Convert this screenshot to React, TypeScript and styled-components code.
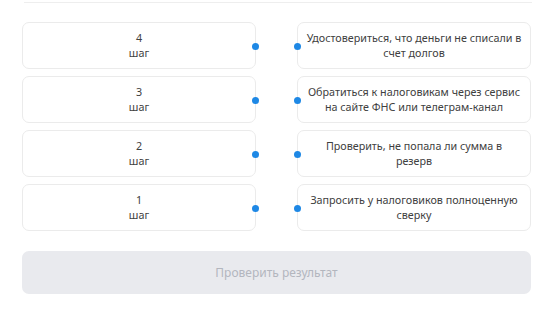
import React from "react";
import styled, { createGlobalStyle } from "styled-components";

const steps = [
  { num: 4, text: "Удостовериться, что деньги не списали в\nсчет долгов" },
  { num: 3, text: "Обратиться к налоговикам через сервис\nна сайте ФНС или телеграм-канал" },
  { num: 2, text: "Проверить, не попала ли сумма в\nрезерв" },
  { num: 1, text: "Запросить у налоговиков полноценную\nсверку" },
];

const App = () => {
  return (
    <>
      <GlobalStyle />
      <Page>
        <PrevEdge />
        <Steps>
          {steps.map((s) => (
            <Row key={s.num}>
              <StepCard>
                <span>{s.num}</span>
                <span>шаг</span>
                <Dot side="right" />
              </StepCard>
              <AnswerCard>
                <Dot side="left" />
                {s.text}
              </AnswerCard>
            </Row>
          ))}
        </Steps>
        <CheckButton disabled>Проверить результат</CheckButton>
      </Page>
    </>
  );
};

const GlobalStyle = createGlobalStyle`
  body {
    margin: 0;
    background: #fff;
    font-family: "Noto Sans", "Open Sans", sans-serif;
  }
`;

const Page = styled.div`
  width: 509px;
  padding: 0 14px 0 22px;
`;

const PrevEdge = styled.div`
  height: 2px;
  margin: 0 -1px 0 2px;
  border-bottom: 1px solid #eeeeee;
`;

const Steps = styled.div`
  margin-top: 19px;
  display: flex;
  flex-direction: column;
  gap: 7px;
`;

const Row = styled.div`
  display: grid;
  grid-template-columns: 234px 234px;
  column-gap: 41px;
`;

const Card = styled.div`
  position: relative;
  box-sizing: border-box;
  height: 47px;
  border: 1px solid #ebebeb;
  border-radius: 7px;
  background: #fff;
  display: flex;
  flex-direction: column;
  align-items: center;
  justify-content: center;
  text-align: center;
  font-size: 10.75px;
  line-height: 15px;
  color: #404040;
`;

const StepCard = styled(Card)`
  padding-top: 1px;
`;

const AnswerCard = styled(Card)`
  padding: 1px 6px 0;
  white-space: pre-line;
`;

const Dot = styled.span<{ side: "left" | "right" }>`
  position: absolute;
  top: 50%;
  ${(p) => (p.side === "right" ? "right: -4px;" : "left: -4px;")}
  width: 7px;
  height: 7px;
  margin-top: -3px;
  border-radius: 50%;
  background: #1e88e5;
`;

const CheckButton = styled.button`
  display: block;
  width: 509px;
  height: 43px;
  margin-top: 20px;
  border: none;
  border-radius: 7px;
  background: #e9eaee;
  color: #b3b6be;
  font-family: inherit;
  font-size: 12px;
`;

export default App;
